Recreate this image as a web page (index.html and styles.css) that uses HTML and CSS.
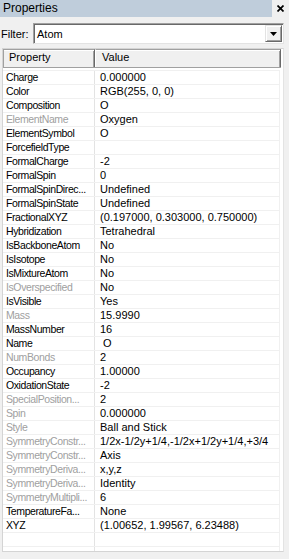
FILE: index.html
```html
<!DOCTYPE html>
<html lang="en">
<head>
    <meta charset="UTF-8">
    <meta name="viewport" content="width=device-width, initial-scale=1.0">
    <title>Properties</title>
    <link rel="stylesheet" href="styles.css">
</head>
<body>
    <div class="panel">
        <div class="titlebar">
            <div class="title">Properties</div>
            <div class="close">
                <svg width="7" height="7" viewBox="0 0 7 7">
                    <path d="M0.5 0.5 L6.5 6.5 M6.5 0.5 L0.5 6.5" stroke="#000" stroke-width="1.7" fill="none"/>
                </svg>
            </div>
        </div>

        <div class="filter-row">
            <label class="filter-label" for="filter">Filter:</label>
            <div class="combo" id="filter">
                <span class="combo-text">Atom</span>
                <span class="combo-btn">
                    <svg width="7" height="4" viewBox="0 0 7 4"><path d="M0 0 H7 L3.5 4 Z" fill="#000"/></svg>
                </span>
            </div>
        </div>

        <div class="grid">
            <div class="grid-head">
                <div class="head-prop">Property</div>
                <div class="head-val">Value</div>
            </div>
            <div class="grid-body">
                <!-- greyed names are read-only properties -->
                <div class="row"><div class="cell-prop">Charge</div><div class="cell-val">0.000000</div></div>
                <div class="row"><div class="cell-prop">Color</div><div class="cell-val">RGB(255, 0, 0)</div></div>
                <div class="row"><div class="cell-prop">Composition</div><div class="cell-val">O</div></div>
                <div class="row"><div class="cell-prop readonly">ElementName</div><div class="cell-val">Oxygen</div></div>
                <div class="row"><div class="cell-prop">ElementSymbol</div><div class="cell-val">O</div></div>
                <div class="row"><div class="cell-prop">ForcefieldType</div><div class="cell-val"></div></div>
                <div class="row"><div class="cell-prop">FormalCharge</div><div class="cell-val">-2</div></div>
                <div class="row"><div class="cell-prop">FormalSpin</div><div class="cell-val">0</div></div>
                <div class="row"><div class="cell-prop">FormalSpinDirec...</div><div class="cell-val">Undefined</div></div>
                <div class="row"><div class="cell-prop">FormalSpinState</div><div class="cell-val">Undefined</div></div>
                <div class="row"><div class="cell-prop">FractionalXYZ</div><div class="cell-val">(0.197000, 0.303000, 0.750000)</div></div>
                <div class="row"><div class="cell-prop">Hybridization</div><div class="cell-val">Tetrahedral</div></div>
                <div class="row"><div class="cell-prop">IsBackboneAtom</div><div class="cell-val">No</div></div>
                <div class="row"><div class="cell-prop">IsIsotope</div><div class="cell-val">No</div></div>
                <div class="row"><div class="cell-prop">IsMixtureAtom</div><div class="cell-val">No</div></div>
                <div class="row"><div class="cell-prop readonly">IsOverspecified</div><div class="cell-val">No</div></div>
                <div class="row"><div class="cell-prop">IsVisible</div><div class="cell-val">Yes</div></div>
                <div class="row"><div class="cell-prop readonly">Mass</div><div class="cell-val">15.9990</div></div>
                <div class="row"><div class="cell-prop">MassNumber</div><div class="cell-val">16</div></div>
                <div class="row"><div class="cell-prop">Name</div><div class="cell-val">&nbsp;O</div></div>
                <div class="row"><div class="cell-prop readonly">NumBonds</div><div class="cell-val">2</div></div>
                <div class="row"><div class="cell-prop">Occupancy</div><div class="cell-val">1.00000</div></div>
                <div class="row"><div class="cell-prop">OxidationState</div><div class="cell-val">-2</div></div>
                <div class="row"><div class="cell-prop readonly">SpecialPosition...</div><div class="cell-val">2</div></div>
                <div class="row"><div class="cell-prop readonly">Spin</div><div class="cell-val">0.000000</div></div>
                <div class="row"><div class="cell-prop readonly">Style</div><div class="cell-val">Ball and Stick</div></div>
                <div class="row"><div class="cell-prop readonly">SymmetryConstr...</div><div class="cell-val">1/2x-1/2y+1/4,-1/2x+1/2y+1/4,+3/4</div></div>
                <div class="row"><div class="cell-prop readonly">SymmetryConstr...</div><div class="cell-val">Axis</div></div>
                <div class="row"><div class="cell-prop readonly">SymmetryDeriva...</div><div class="cell-val">x,y,z</div></div>
                <div class="row"><div class="cell-prop readonly">SymmetryDeriva...</div><div class="cell-val">Identity</div></div>
                <div class="row"><div class="cell-prop readonly">SymmetryMultipli...</div><div class="cell-val">6</div></div>
                <div class="row"><div class="cell-prop">TemperatureFa...</div><div class="cell-val">None</div></div>
                <div class="row"><div class="cell-prop">XYZ</div><div class="cell-val">(1.00652, 1.99567, 6.23488)</div></div>
                <div class="row"><div class="cell-prop"></div><div class="cell-val"></div></div>
                <div class="row"><div class="cell-prop"></div><div class="cell-val"></div></div>
            </div>
        </div>
    </div>
</body>
</html>
```

FILE: styles.css
```css
body {
    margin: 0;
    background-color: #f0f0f0;
    font-family: "Liberation Sans", Arial, sans-serif;
    font-size: 11px;
    color: #000;
}
.panel {
    width: 289px;
    height: 559px;
    display: flex;
    flex-direction: column;
    overflow: hidden;
}
.titlebar {
    display: flex;
    height: 17px;
}
.title {
    width: 269px;
    padding-left: 3px;
    background-color: #bfcddb;
    font-size: 12px;
    line-height: 17px;
}
.close {
    flex: 1;
    display: flex;
    justify-content: center;
    align-items: center;
    padding-bottom: 1px;
}
.filter-row {
    display: flex;
    align-items: center;
    margin-top: 6px;
    padding-left: 1px;
}
.filter-label {
    width: 32px;
}
.combo {
    box-sizing: border-box;
    width: 251px;
    height: 21px;
    display: flex;
    align-items: center;
    background-color: #fff;
    border: 1px solid;
    border-color: #a0a0a0 #e3e3e3 #e3e3e3 #a0a0a0;
    box-shadow: inset 1px 1px 0 #696969;
    padding: 1px 1px 1px 2px;
}
.combo-text {
    flex: 1;
    padding-left: 1px;
}
.combo-btn {
    box-sizing: border-box;
    width: 17px;
    height: 17px;
    display: flex;
    justify-content: center;
    align-items: center;
    background-color: #f0f0f0;
    border: 1px solid;
    border-color: #e3e3e3 #696969 #696969 #e3e3e3;
    box-shadow: inset 1px 1px 0 #fff, inset -1px -1px 0 #a0a0a0;
}
.grid {
    box-sizing: border-box;
    margin: 4px 0 0 2px;
    width: 282px;
    height: 504px;
    background-color: #fff;
    border: 1px solid #d4d4d4;
    border-right-color: #e3e3e3;
    overflow: hidden;
}
.grid-head {
    display: flex;
    height: 18px;
    width: 278px;
    background-color: #f0f0f0;
    border-bottom: 1px solid #a0a0a0;
}
.head-prop, .head-val {
    box-sizing: border-box;
    line-height: 15px;
    border-top: 1px solid #a0a0a0;
    border-left: 1px solid #fff;
    border-right: 1px solid #696969;
    box-shadow: inset 0 1px 0 #fff, inset -1px 0 0 #a0a0a0;
}
.head-prop {
    width: 92px;
    padding-left: 5px;
    border-left-color: #a0a0a0;
}
.head-val {
    flex: 1;
    padding-left: 6px;
}
.grid-body {
    padding-top: 2px;
}
.row {
    display: flex;
    height: 13px;
    width: 277px;
    border-top: 1px solid #f0f0f0;
    line-height: 13px;
    white-space: nowrap;
}
.cell-prop {
    width: 88px;
    padding-left: 3px;
    border-right: 1px solid #e3e3e3;
    overflow: hidden;
    font-size: 10.5px;
    letter-spacing: -0.4px;
}
.cell-prop.readonly {
    color: #a0a0a0;
}
.cell-val {
    flex: 1;
    padding-left: 5px;
    overflow: hidden;
    border-right: 1px solid #f0f0f0;
}
```
